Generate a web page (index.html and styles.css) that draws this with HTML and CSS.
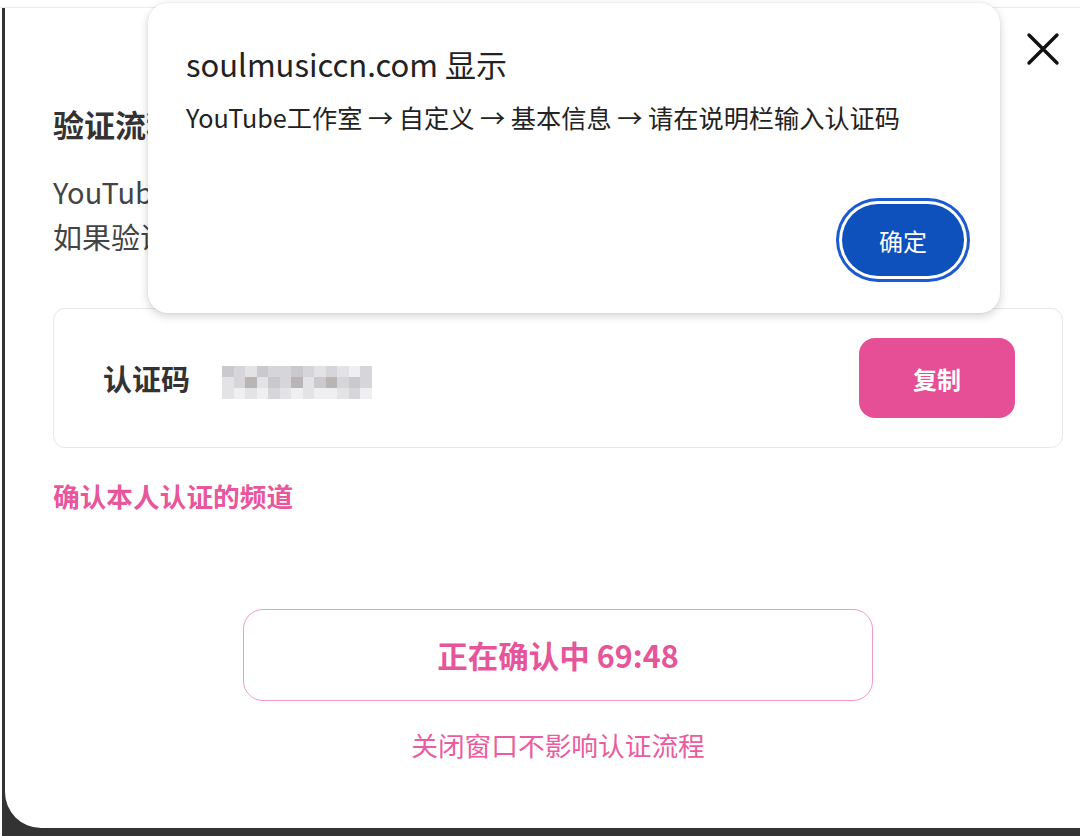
FILE: index.html
```html
<!DOCTYPE html>
<html lang="zh-CN">
<head>
<meta charset="utf-8">
<title>验证流程</title>
<link rel="stylesheet" href="styles.css">
</head>
<body>
<div class="screen">
  <div class="topline"></div>
  <div class="stage">
    <div class="modal">
      <button class="close" aria-label="关闭">
        <svg width="34" height="34" viewBox="0 0 34 34"><path d="M3 3 L31 31 M31 3 L3 31" stroke="#111" stroke-width="3.4" stroke-linecap="round" fill="none"/></svg>
      </button>
      <h1 class="title">验证流程</h1>
      <p class="desc">YouTube工作室中输入认证码后，点击确认<br>如果验证失败，请重新尝试</p>
      <div class="codebox">
        <span class="code-label">认证码</span>
        <div class="mosaic">
          <i class="g3"></i><i class="g2"></i><i class="g1"></i><i class="g3"></i><i class="g2"></i><i class="g2"></i><i class="g3"></i><i class="g2"></i><i class="g1"></i><i class="g2"></i><i class="g1"></i><i class="g0"></i><i class="g2"></i>
          <i class="g1"></i><i class="g2"></i><i class="g4"></i><i class="g1"></i><i class="g3"></i><i class="g2"></i><i class="g4"></i><i class="g1"></i><i class="g3"></i><i class="g4"></i><i class="g2"></i><i class="g3"></i><i class="g2"></i>
          <i class="g1"></i><i class="g0"></i><i class="g1"></i><i class="g0"></i><i class="g2"></i><i class="g1"></i><i class="g0"></i><i class="g1"></i><i class="g0"></i><i class="g0"></i><i class="g1"></i><i class="g2"></i><i class="g0"></i>
        </div>
        <button class="copy">复制</button>
      </div>
      <a class="channel">确认本人认证的频道</a>
      <div class="status-wrap">
        <div class="status">正在确认中 69:48</div>
        <div class="hint">关闭窗口不影响认证流程</div>
      </div>
    </div>
  </div>

  <div class="dialog" role="alertdialog">
    <div class="dlg-title">soulmusiccn.com 显示</div>
    <div class="dlg-msg">YouTube工作室 → 自定义 → 基本信息 → 请在说明栏输入认证码</div>
    <div class="dlg-actions">
      <button class="ok">确定</button>
    </div>
  </div>
</div>
</body>
</html>
```

FILE: styles.css
```css
* { box-sizing: border-box; }
html, body { margin: 0; padding: 0; }
body {
  font-family: "Noto Sans CJK SC", "Noto Sans", sans-serif;
  background: #fff;
}
.screen {
  position: relative;
  width: 1080px;
  height: 836px;
  overflow: hidden;
  background: #fff;
}
.topline {
  height: 8px;
  border-bottom: 1px solid #ececec;
}
.stage {
  margin-left: 2px;
  height: 828px;
  background: #333;
  padding: 0 0 8px 3px;
}
.modal {
  position: relative;
  height: 100%;
  background: #fff;
  border-bottom-left-radius: 36px;
  padding: 96px 17px 0 48px;
  color: #333;
}
.close {
  position: absolute;
  top: 24px;
  right: 20px;
  width: 34px;
  height: 34px;
  padding: 0;
  border: 0;
  background: none;
}
.title {
  margin: 0;
  font-size: 31px;
  line-height: 40px;
  font-weight: 700;
  color: #333;
}
.desc {
  margin: 25px 0 0;
  font-size: 29px;
  line-height: 45px;
  color: #444;
  white-space: nowrap;
}
.codebox {
  margin-top: 49px;
  height: 140px;
  border: 1px solid #e6e6e6;
  border-radius: 12px;
  display: flex;
  align-items: center;
  padding: 0 47px 0 49px;
}
.code-label {
  font-size: 29px;
  font-weight: 700;
  color: #333;
}
.mosaic {
  margin-left: 32px;
  margin-top: 8px;
  display: grid;
  grid-template-columns: repeat(13, 11.5px);
  grid-auto-rows: 11px;
  opacity: 0.9;
}
.mosaic i { display: block; }
.g0 { background: #eeedf0; }
.g1 { background: #e0dfe3; }
.g2 { background: #d2d1d5; }
.g3 { background: #c5c4c9; }
.g4 { background: #b2aeae; }
.copy {
  margin-left: auto;
  width: 156px;
  height: 80px;
  border: 0;
  border-radius: 16px;
  background: #e64e95;
  color: #fff;
  font-family: inherit;
  font-size: 24px;
  font-weight: 700;
}
.channel {
  display: block;
  margin-top: 30px;
  font-size: 26.7px;
  line-height: 36px;
  font-weight: 700;
  color: #e8569b;
}
.status-wrap {
  display: flex;
  flex-direction: column;
  align-items: center;
  margin-top: 95px;
}
.status {
  width: 630px;
  height: 92px;
  border: 1.5px solid #f29bc5;
  border-radius: 20px;
  display: flex;
  align-items: center;
  justify-content: center;
  font-size: 30.5px;
  font-weight: 700;
  color: #e6559a;
}
.hint {
  margin-top: 26px;
  font-size: 26.7px;
  line-height: 36px;
  color: #ea5c9e;
}
.dialog {
  position: absolute;
  left: 148px;
  top: 3px;
  width: 852px;
  height: 310px;
  background: #fff;
  border-radius: 20px;
  box-shadow: 0 3px 10px rgba(0,0,0,0.18), 0 0 2px rgba(0,0,0,0.08);
  padding: 41px 36px 0 38px;
  color: #222;
}
.dlg-title {
  font-size: 31px;
  line-height: 40px;
  color: #222;
}
.dlg-msg {
  margin-top: 15px;
  font-size: 25.2px;
  line-height: 36px;
  color: #222;
}
.dlg-actions {
  margin-top: 69px;
  display: flex;
  justify-content: flex-end;
}
.ok {
  width: 122px;
  height: 72px;
  border: 0;
  border-radius: 999px;
  background: #0e50bc;
  color: #fff;
  font-family: inherit;
  font-size: 24px;
  box-shadow: 0 0 0 3px #fff, 0 0 0 6px #1b5ad3;
}
```
